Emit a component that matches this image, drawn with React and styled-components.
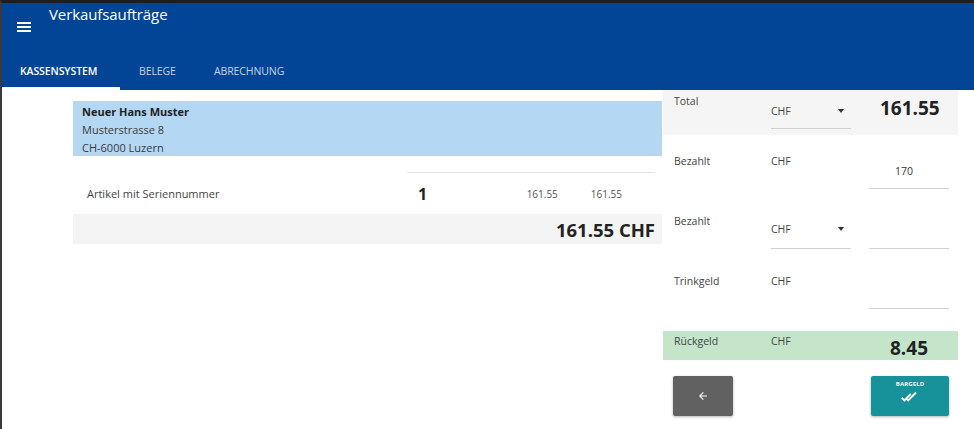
import styled, { createGlobalStyle } from "styled-components";

const Global = createGlobalStyle`
  html, body { margin: 0; padding: 0; background: #fff; }
  body { font-family: "Open Sans", "Liberation Sans", sans-serif; color: #333; }
`;

const Frame = styled.div`
  width: 974px;
  height: 429px;
  box-sizing: border-box;
  border-top: 3px solid #1e1e1e;
  border-left: 2px solid #3a3a3a;
  overflow: hidden;
  display: flex;
  flex-direction: column;
`;

const Header = styled.header`
  background: #024597;
  color: #fff;
  height: 87px;
  display: flex;
  flex-direction: column;
`;

const TopBar = styled.div`
  height: 47px;
  display: flex;
  align-items: flex-start;
`;

const Menu = styled.div`
  width: 14px;
  margin: 19px 0 0 15px;
  display: flex;
  flex-direction: column;
  gap: 2px;
  span { display: block; height: 2px; background: #fff; }
`;

const Title = styled.h1`
  margin: 1px 0 0 18px;
  font-size: 15px;
  font-weight: 400;
  letter-spacing: -0.1px;
`;

const Tabs = styled.nav`
  display: flex;
  height: 40px;
`;

const Tab = styled.div`
  width: ${({ w }) => w}px;
  box-sizing: border-box;
  padding-left: ${({ pl }) => pl}px;
  padding-top: 14px;
  font-size: 10.5px;
  font-weight: ${({ active }) => (active ? 600 : 400)};
  color: ${({ active }) => (active ? "#fff" : "#c6d4ea")};
  border-bottom: 3px solid ${({ active }) => (active ? "#fff" : "transparent")};
  letter-spacing: -0.1px;
`;

const Body = styled.main`
  display: flex;
  flex: 1;
`;

const LeftCol = styled.section`
  width: 589px;
  margin-left: 71px;
  padding-top: 11px;
`;

const Customer = styled.div`
  background: #b4d8f4;
  height: 55px;
  box-sizing: border-box;
  padding: 2px 9px 0;
  font-size: 11px;
  line-height: 18px;
  color: #3a3a3a;
`;

const CustomerName = styled.div`
  font-weight: 700;
  color: #222;
`;

const ItemRow = styled.div`
  display: flex;
  margin-top: 16px;
  height: 42px;
`;

const ItemName = styled.div`
  width: 320px;
  padding-left: 14px;
  padding-top: 14px;
  font-size: 11px;
  color: #444;
`;

const ItemNums = styled.div`
  width: 248px;
  border-top: 1px solid #e4e4e4;
  display: flex;
  align-items: center;
`;

const Qty = styled.div`
  width: 110px;
  padding-left: 11px;
  font-size: 16px;
  font-weight: 700;
  color: #222;
`;

const Price = styled.div`
  width: 65px;
  font-size: 10px;
  color: #555;
`;

const TotalBar = styled.div`
  background: #f4f4f4;
  height: 30px;
  display: flex;
  align-items: center;
  justify-content: flex-end;
  padding-right: 7px;
  font-size: 18.5px;
  font-weight: 700;
  color: #222;
`;

const RightCol = styled.aside`
  width: 295px;
  margin-left: 1px;
  display: flex;
  flex-direction: column;
`;

const Row = styled.div`
  display: grid;
  grid-template-columns: 97px 80px 18px 80px;
  height: ${({ h }) => h}px;
  margin-top: ${({ mt }) => mt || 0}px;
  background: ${({ bg }) => bg || "transparent"};
  box-sizing: border-box;
  padding-left: 11px;
  > :nth-child(3) { grid-column: 4; }
`;

const Label = styled.div`
  font-size: 10.5px;
  color: #444;
  padding-top: ${({ pt }) => pt}px;
`;

const Currency = styled.div`
  font-size: 10.5px;
  color: #444;
  padding-top: ${({ pt }) => pt}px;
`;

const Select = styled.div`
  box-sizing: border-box;
  height: ${({ h }) => h}px;
  border-bottom: 1px solid #cfcfcf;
  display: flex;
  align-items: center;
  justify-content: space-between;
  padding-right: 7px;
  font-size: 10.5px;
  color: #444;
  padding-top: ${({ pt }) => pt || 0}px;
`;

const Caret = styled.span`
  width: 0;
  height: 0;
  border-left: 3.5px solid transparent;
  border-right: 3.5px solid transparent;
  border-top: 4px solid #333;
`;

const Field = styled.div`
  box-sizing: border-box;
  height: ${({ h }) => h}px;
  border-bottom: 1px solid #d2d2d2;
  display: flex;
  align-items: flex-end;
  padding-bottom: 10px;
  padding-left: 26px;
  font-size: 10.5px;
  color: #333;
`;

const Big = styled.div`
  font-size: 19px;
  font-weight: 700;
  color: #222;
  padding-top: ${({ pt }) => pt}px;
  padding-left: ${({ pl }) => pl}px;
`;

const Buttons = styled.div`
  display: flex;
  justify-content: space-between;
  margin-top: 16px;
  padding: 0 9px 0 10px;
`;

const BackButton = styled.button`
  width: 60px;
  height: 40px;
  border: none;
  border-radius: 2px;
  background: #616161;
  color: #fff;
  display: flex;
  align-items: center;
  justify-content: center;
  box-shadow: 0 1px 3px rgba(0, 0, 0, 0.3);
  padding: 0;
`;

const CashButton = styled.button`
  width: 78px;
  height: 40px;
  border: none;
  border-radius: 2px;
  background: #17929a;
  color: #fff;
  display: flex;
  flex-direction: column;
  align-items: center;
  padding: 4px 0 0;
  box-shadow: 0 1px 3px rgba(0, 0, 0, 0.3);
  font-family: "Open Sans", sans-serif;
  font-size: 6px;
  font-weight: 700;
  letter-spacing: 0.1px;
  gap: 3px;
`;

export default function App() {
  return (
    <>
      <Global />
      <Frame>
        <Header>
          <TopBar>
            <Menu><span /><span /><span /></Menu>
            <Title>Verkaufsaufträge</Title>
          </TopBar>
          <Tabs>
            <Tab w={118} pl={18} active>KASSENSYSTEM</Tab>
            <Tab w={75} pl={19}>BELEGE</Tab>
            <Tab w={120} pl={19}>ABRECHNUNG</Tab>
          </Tabs>
        </Header>
        <Body>
          <LeftCol>
            <Customer>
              <CustomerName>Neuer Hans Muster</CustomerName>
              <div>Musterstrasse 8</div>
              <div>CH-6000 Luzern</div>
            </Customer>
            <ItemRow>
              <ItemName>Artikel mit Seriennummer</ItemName>
              <ItemNums>
                <Qty>1</Qty>
                <Price>161.55</Price>
                <Price>161.55</Price>
              </ItemNums>
            </ItemRow>
            <TotalBar>161.55 CHF</TotalBar>
          </LeftCol>
          <RightCol>
            <Row h={45} bg="#f5f5f5">
              <Label pt={4}>Total</Label>
              <Select h={39} pt={4}>CHF<Caret /></Select>
              <Big pt={5} pl={11}>161.55</Big>
            </Row>
            <Row h={60} mt={5}>
              <Label pt={14}>Bezahlt</Label>
              <Currency pt={14}>CHF</Currency>
              <Field h={49}>170</Field>
            </Row>
            <Row h={60}>
              <Label pt={14}>Bezahlt</Label>
              <Select h={49} pt={10}>CHF<Caret /></Select>
              <Field h={49} />
            </Row>
            <Row h={60}>
              <Label pt={14}>Trinkgeld</Label>
              <Currency pt={14}>CHF</Currency>
              <Field h={49} />
            </Row>
            <Row h={29} mt={11} bg="#c5e5cb">
              <Label pt={3}>Rückgeld</Label>
              <Currency pt={3}>CHF</Currency>
              <Big pt={4} pl={21}>8.45</Big>
            </Row>
            <Buttons>
              <BackButton aria-label="Zurück">
                <svg width="12" height="12" viewBox="0 0 24 24">
                  <path d="M20 11H7.83l5.59-5.59L12 4l-8 8 8 8 1.41-1.41L7.83 13H20v-2z" fill="#fff" />
                </svg>
              </BackButton>
              <CashButton>
                BARGELD
                <svg width="18" height="12" viewBox="0 0 24 16">
                  <path d="M1 9l3.5 3.5L13 4M7 10l2.5 2.5L20 2" stroke="#fff" strokeWidth="2.4" fill="none" />
                </svg>
              </CashButton>
            </Buttons>
          </RightCol>
        </Body>
      </Frame>
    </>
  );
}
